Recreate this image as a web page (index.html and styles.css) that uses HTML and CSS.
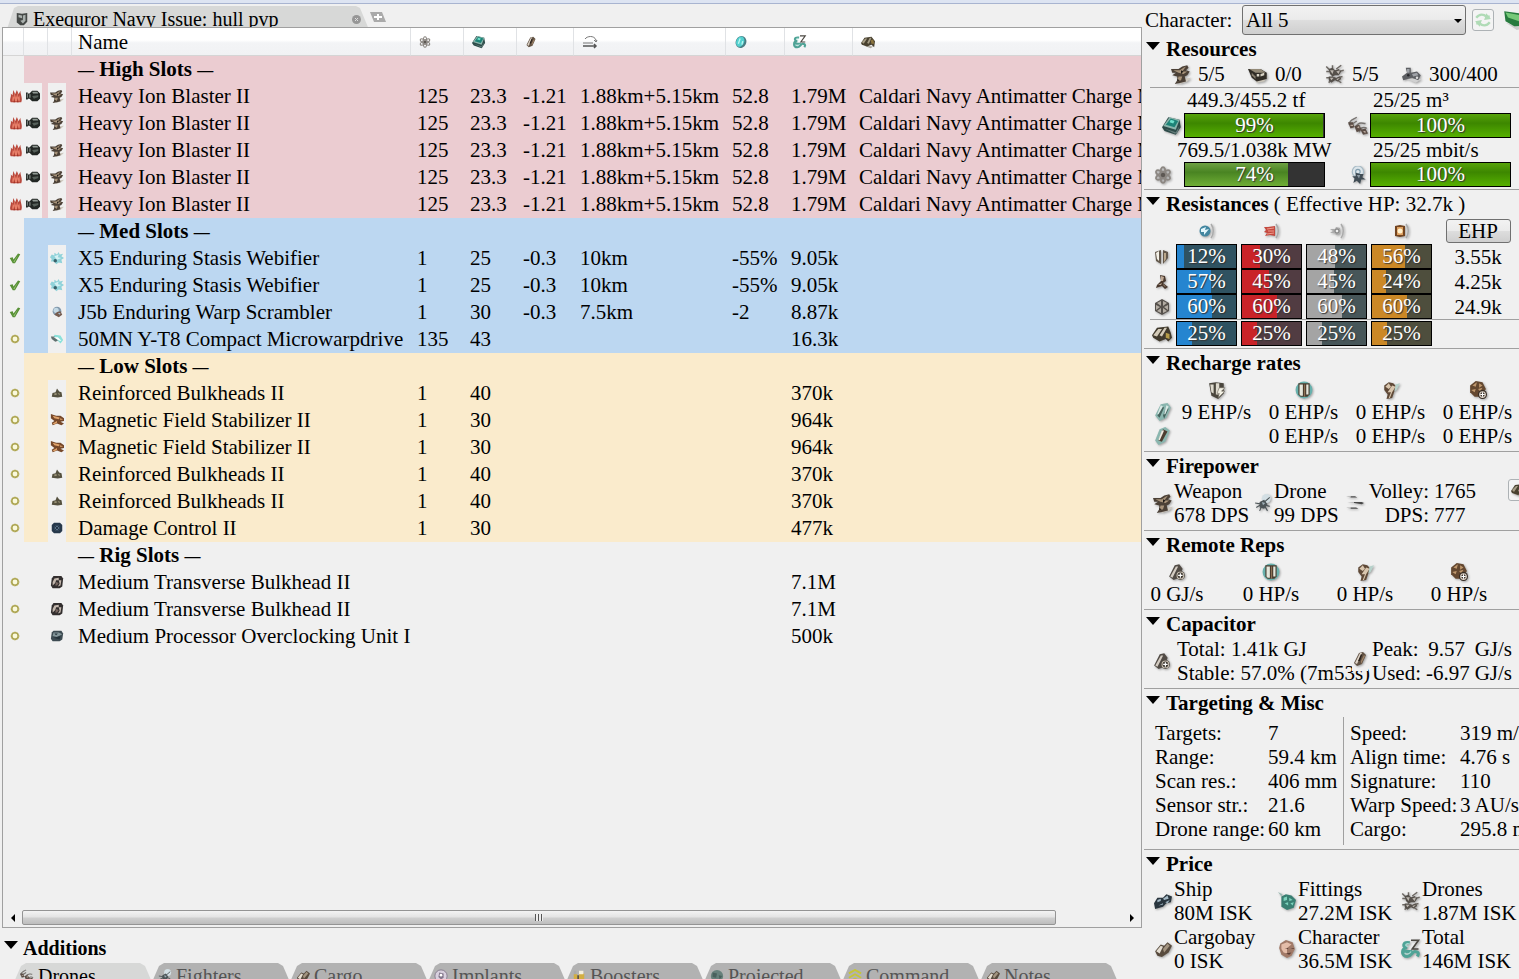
FILE: index.html
```html
<!DOCTYPE html>
<html lang="en">
<head>
  <meta charset="UTF-8">
  <meta name="viewport" content="width=device-width, initial-scale=1.0">
  <title>Exequror Navy Issue: hull pvp</title>
  <link rel="stylesheet" href="styles.css">
</head>
<body>
  <!-- Icon sprite -->
  <svg class="sprite" aria-hidden="true">
    <symbol id="flame" viewBox="0 0 16 16"><path fill="#b8483c" d="M2 15C0 12 3 9 2 5l2 2 1-6 2 5 2-5 2 5 2-4c0 4 3 9 1 13z"/><path fill="#e8806a" d="M4 14c-1-3 1-5 0-7l2 3 0-6 2 6 2-6 0 6 2-3c0 3 1 4 0 7z"/><path fill="#a33226" d="M5 15l1-5 1 5zM9 15l1-5 1 5z"/></symbol>
    <symbol id="ammo" viewBox="0 0 16 16"><path fill="#222724" d="M0 4h2v1h2l3-3h6l3 3v6l-3 3-6 0-3-3H2v1H0z"/><path fill="#929b95" d="M7 3l6 0 1 2-6 0zM1 5h1v5H1z"/><path fill="#56605a" d="M7 8l7-1v2l-5 2z"/><path fill="#aeb5b0" d="M4 6h1v4H4z"/></symbol>
    <symbol id="turret" viewBox="0 0 16 16"><path fill="#cfc9bf" d="M8 12l8-1-3 3-6 2z"/><path fill="#4b4036" d="M0 4l6 0 3-2 4-1 1 2-2 2 3 1-2 3-2 1 1 4-4 1-5 1 2-3 0-3-4-1 3-2-3 0z"/><path fill="#a8937a" d="M2 5l5 0 3-2 2-1-3 4 4 0-3 2-4-1zM6 10l3 0-1 3-3 1z"/><path fill="#201c18" d="M8 5l2 1-2 2zM5 12l2 1-2 1z"/></symbol>
    <symbol id="launcher" viewBox="0 0 16 16"><path fill="#c9c4b8" d="M6 12l10-2-3 4-6 1z"/><path fill="#302c26" d="M0 4l10 0 5 3v5l-8 2-4-3z"/><path fill="#938a78" d="M1 4l9 0 4 3-8 0z"/><path fill="#d9d4c6" d="M7 8l2 0v2l-2 0zM10 8l3-1v2l-3 1z"/><path fill="#887f6f" d="M3 9l3 3 0-2-3-3z"/></symbol>
    <symbol id="drone" viewBox="0 0 16 16"><g fill="none" stroke="#6d6863" stroke-width="1.200"><path d="M1 2l3 3M1 6l4 0M6 1v3M9 4l4-3M11 6l4-1M1 11l3 0M3 15l2-3M10 11l4-1M10 13l3 2"/></g><path fill="#55504b" d="M3 4l3-1 2 2 3-1 2 2-2 3-3 0-2 1-2-2zM3 10l3 0 3 1 3-1 1 2-3 2-2-1-3 2-2-2z"/><path fill="#bbb5ae" d="M4 5l3 0-1 3zM9 6l3-1-1 3zM4 11l3 0-2 2zM9 12l3-1-2 2z"/></symbol>
    <symbol id="calib" viewBox="0 0 16 16"><path fill="#d0d0d0" d="M4 12h12l-5 3z"/><path fill="#5d5f63" d="M3 3l4 0 0 4 5-1 3 3-2 4-5-2-7 2-1-3 4-3z"/><path fill="#a0a3a8" d="M4 4h2v3H4zM8 8l4-1 1 2-4 1z"/><circle cx="5" cy="9" r="1" fill="#27282b"/><circle cx="12" cy="11" r="1" fill="#ddd"/></symbol>
    <symbol id="cpu" viewBox="0 0 16 16"><path fill="#2d4b49" d="M0 9l5-8 9 2 1 6-4 6-9-3z"/><path fill="#8ab5ac" d="M1 8l5-7 8 2-3 8z"/><path fill="#1d8377" d="M3 7l4-5 6 2-3 5z"/><path fill="#6fe0cb" d="M6 5l1-2 3 1-1 2z"/><path fill="#647c7a" d="M2 10l9 3 3-5-2 6-2 0z"/></symbol>
    <symbol id="atom" viewBox="0 0 16 16"><g fill="none" stroke="#8c8782" stroke-width="1.500"><ellipse cx="8" cy="8" rx="2.500" ry="7"/><ellipse cx="8" cy="8" rx="2.500" ry="7" transform="rotate(60 8 8)"/><ellipse cx="8" cy="8" rx="2.500" ry="7" transform="rotate(120 8 8)"/></g><circle cx="8" cy="8" r="2" fill="#5d5853"/></symbol>
    <symbol id="bay" viewBox="0 0 16 16"><g fill="none" stroke="#777370" stroke-width="1.200"><path d="M1 7c0-4 3-4 6-6M4 6l3-2M6 9c3-5 5-3 8-3M9 13c1-5 5-4 6-3"/></g><path fill="#5b4d46" d="M0 5l4 0 1 4-3 1zM5 8l4-1 2 4-4 2zM10 11l4-1 2 4-4 1z"/><path fill="#b9a89c" d="M2 7h2v1H2zM7 9l2-1v2zM12 12h2v2z"/></symbol>
    <symbol id="band" viewBox="0 0 16 16"><circle cx="7" cy="5" r="5" fill="#dce5ea" stroke="#a6bac5"/><circle cx="7" cy="5" r="2" fill="none" stroke="#829eae"/><path fill="#404c54" d="M5 6l4 1 3 0-1 3 3 2-4 0-1 4-3-3-3 2 1-4-2-2 3 0z"/><path fill="#8d9ba4" d="M6 8l3 0-1 3z"/></symbol>
    <symbol id="cap" viewBox="0 0 16 16"><path fill="#605143" d="M2 12L7 2l4-1 3 3-4 9-5 2z"/><path fill="#dfd5c9" d="M3 12l5-10 2 0-5 11z"/><path fill="#a08469" d="M9 10l3-6 1 1-4 8z"/><path fill="#29211a" d="M6 10l3-7 1 1-2 6z"/></symbol>
    <symbol id="capplus" viewBox="0 0 16 16"><path fill="#514b45" d="M1 12L6 2l4-1 3 4-3 8-5 2z"/><path fill="#d4ccc2" d="M2 12L7 3l2 0-5 10z"/><circle cx="11" cy="11" r="4" fill="#3e3932"/><circle cx="11" cy="11" r="3" fill="none" stroke="#c8bfb2"/><path stroke="#fff" d="M9 11h4M11 9v4"/></symbol>
    <symbol id="range" viewBox="0 0 16 16"><path fill="none" stroke="#777" d="M3 5C5 2 12 1 14 6v2M12 6l2 2 1-2M1 9h10"/><path fill="none" stroke="#555" stroke-width="1.500" d="M1 12h13M12 10l2 2-2 2"/></symbol>
    <symbol id="disc" viewBox="0 0 16 16"><ellipse cx="8" cy="8" rx="6" ry="7" transform="rotate(25 8 8)" fill="#497d83"/><ellipse cx="7" cy="8" rx="4.500" ry="6" transform="rotate(25 8 8)" fill="#53d1d0"/><path stroke="#bdf6f0" stroke-width="1.500" d="M5 10l2-6M9 11l1-4"/></symbol>
    <symbol id="isk" viewBox="0 0 16 16"><path fill="none" stroke="#4fa396" stroke-width="2.500" d="M7 3C1 2 1 7 5 7c-5 0-5 7 0 7 3 0 4-4 6-4s4 1 2 4M2 10h7"/><path fill="none" stroke="#a5dcd3" d="M7 4C3 3 3 6 6 6M3 11c1 2 4 1 5-1"/><path fill="none" stroke="#4b4741" stroke-width="1.300" d="M8 1h6L9 8h5"/></symbol>
    <symbol id="charge" viewBox="0 0 16 16"><path fill="#aca79d" d="M3 12l11 1-3 2z"/><path fill="#49412f" d="M0 9l4-6 8-1 4 5-1 7-3-3-5 2-6-2z"/><path fill="#a69d86" d="M1 8l4-4 2 0-4 6zM7 9l3-6 2 0-3 7z"/><path fill="#8b743e" d="M11 6l3-1 1 5-3 0z"/></symbol>
    <symbol id="web" viewBox="0 0 16 16"><path fill="#8fd2d9" d="M2 4l3 1 0-3 3 2 2-3 1 3 4-1-2 3 3 2-3 2 1 4-4-1-3 2-2-3-4 0 1-3-2-2z"/><path fill="#d5f1f3" d="M5 6l5-2-1 3 4 1-5 2z"/><circle cx="6" cy="11" r="2" fill="#39626a"/></symbol>
    <symbol id="scram" viewBox="0 0 16 16"><circle cx="8" cy="7" r="5" fill="#8299ad"/><circle cx="7" cy="6" r="3" fill="#c4d9e5"/><path fill="#775d50" d="M8 8l4-1 2 4-4 3-5-3z"/><path fill="#a3b9cb" d="M9 9l3 0-1 2z"/></symbol>
    <symbol id="mwd" viewBox="0 0 16 16"><path fill="#8be1da" d="M5 3l7 1 3 5-3 4-3-3-5-2z"/><path fill="#60706f" d="M1 5l4 0 4 5-3 1-4-3z"/><path fill="#fff" d="M4 6l5 0 4 4-2 0z"/></symbol>
    <symbol id="check" viewBox="0 0 16 16"><path fill="#568f34" d="M1 8l4-1 1 3 6-8 3 1-7 12H5z"/><path fill="#9bc77b" d="M3 8l3 5 6-9-5 10z"/></symbol>
    <symbol id="ring" viewBox="0 0 16 16"><circle cx="8" cy="8" r="4.500" fill="#faf9dc" stroke="#aaa34e" stroke-width="2.500"/><circle cx="8" cy="8" r="5" fill="none" stroke="#c9c282" stroke-dasharray="2 2"/></symbol>
    <symbol id="bulk" viewBox="0 0 16 16"><path fill="#55513f" d="M1 13l1-5 4-1 2-5 3 4 3 1 1 6-6 1z"/><path fill="#9e967b" d="M4 9l3-1 1 2-3 1zM9 8l3 1-1 2z"/></symbol>
    <symbol id="mag" viewBox="0 0 16 16"><path fill="#76482a" d="M1 1l6 2 5 0 4 3v3l-4 1 4 2-3 2-5-2-5 2-1-3 3-2-4-3z"/><path fill="#e0a36b" d="M3 3l8 2-1 2-5-1zM3 12l5-3 0 2-3 2zM11 6l4 1-3 1z"/></symbol>
    <symbol id="dc" viewBox="0 0 16 16"><path fill="#26384b" d="M4 1h8l3 3v8l-3 3H4l-3-3V4z"/><path fill="#587086" d="M5 5h6v6H5z"/><path stroke="#152332" d="M5 5l6 6M11 5l-6 6"/></symbol>
    <symbol id="rig" viewBox="0 0 16 16"><path fill="#322e2e" d="M4 1h9l2 3-1 9-3 2H3l-2-3 1-8z"/><path fill="#c3b7ad" d="M5 4l5-1 0 3-3 0-1 3-3 3 0-4zM10 6l3 0-1 6-3 1 2-3z"/><path fill="#786760" d="M7 8l3 1-2 3-2 0z"/></symbol>
    <symbol id="rig2" viewBox="0 0 16 16"><path fill="#3d4b52" d="M4 2h9l2 3-1 7-3 2H3l-2-3 1-7z"/><path fill="#84969a" d="M4 4h6l4 2-6 3-5-1z"/><path fill="#24323a" d="M5 5h4l-2 2zM4 10l8-2-1 4z"/></symbol>
    <symbol id="em" viewBox="0 0 16 16"><circle cx="6" cy="8" r="5.500" fill="#4286a0"/><path fill="#e2f6fc" d="M2 6l5-2-1 3 4-1-5 6 0-3-3 0z"/><path fill="none" stroke="#aaa" stroke-width="1.500" d="M12 1c3 4 3 10 0 14"/></symbol>
    <symbol id="therm" viewBox="0 0 16 16"><path fill="#c4493f" d="M0 4l4 0 7-1v10l-5-1-5 1 2-3-3-1 2-2z"/><path fill="none" stroke="#ef9b8b" d="M3 6l7-1M4 8l6 0M3 11l7-1"/><path fill="none" stroke="#aaa" stroke-width="1.500" d="M12 1c3 4 3 10 0 14"/></symbol>
    <symbol id="kin" viewBox="0 0 16 16"><path fill="#aaa" d="M1 6l5 0 1-2 4 1 0 6-4 1-1-2-5 0 3-2z"/><circle cx="8" cy="8" r="2" fill="#eee" stroke="#777"/><path fill="none" stroke="#aaa" stroke-width="1.500" d="M12 1c3 4 3 10 0 14"/></symbol>
    <symbol id="exp" viewBox="0 0 16 16"><path fill="#724420" d="M1 3l5-1 5 1v10l-5 1-5-1z"/><path fill="#dda060" d="M3 4h6v8H3z"/><circle cx="6" cy="8" r="2.500" fill="#fff1ce"/><path fill="none" stroke="#aaa" stroke-width="1.500" d="M12 1c3 4 3 10 0 14"/></symbol>
    <symbol id="shield" viewBox="0 0 16 16"><path fill="#63584c" d="M1 3l6-2v14l-5-3zM9 1l5 2 0 6-5 6z"/><path fill="#f4f1e8" d="M2 4l3-2v10l-2-2z"/><path fill="#bba78b" d="M10 4l2 0 0 6-2 3z"/></symbol>
    <symbol id="armor" viewBox="0 0 16 16"><path fill="#49382d" d="M6 1l5 1 1 5-3 2 5 4-3 2-3-3-6 2 1-3 4-4z"/><path fill="#c0aa96" d="M7 2l3 1-1 4-2 0zM4 11l4-2-1 2zM9 10l3 3-2-1z"/></symbol>
    <symbol id="hull" viewBox="0 0 16 16"><path fill="#55504b" d="M8 0l7 4v8l-7 4-7-4V4z"/><path fill="#b3aca3" d="M7 2v5L3 4zM9 2l4 2-4 3zM2 6l4 2-4 3zM10 8l4-2v5zM7 9v5l-4-2zM9 9l4 3-4 2z"/></symbol>
    <symbol id="pattern" viewBox="0 0 16 16"><path fill="#40392c" d="M0 9l4-6 9-1 2 5 1 4-3 3-2-2-5 2-5-3z"/><path fill="#d4cbb9" d="M1 9l4-5 3 0-4 6zM6 9l4-6 2 0-4 7z"/><path fill="#b59b48" d="M11 7l3 1 0 4-3-1z"/></symbol>
    <symbol id="passive" viewBox="0 0 16 16"><path fill="#4a463d" d="M1 2l6-1 7 1v9l-5 5-6-3z"/><path fill="#dedace" d="M2 3h3v8l-2-1zM7 2h3v10l-3 0z"/><path fill="#f4f2e6" stroke="#645f54" stroke-width=".5" d="M10 6h5l-3 3h3l-6 6 1-4H8z"/></symbol>
    <symbol id="shieldrep" viewBox="0 0 16 16"><circle cx="8" cy="8" r="7.500" fill="#68b1ad"/><path fill="#483b2e" d="M3 2h10v10l-2 2H5l-2-2z"/><path fill="#e4e7dc" d="M4 3h3v10H5l-1-1zM10 3h2v9h-2z"/><path fill="#8b7054" d="M8 3h1v11H8z"/></symbol>
    <symbol id="armorrep" viewBox="0 0 16 16"><path fill="#5f4937" d="M2 4l4-3 4 1 3 3-2 4-2 6-5 1 1-4-3-4z"/><path fill="#b7d2cb" d="M12 3l4-1-3 6-2 1z"/><path fill="#d9c6ae" d="M3 5l3-3 2 3-2 2zM9 4l3 1-3 5-2 5-1 0 2-5H5z"/></symbol>
    <symbol id="hullrep" viewBox="0 0 16 16"><path fill="#644830" d="M1 4l5-4 6 1 3 6-4 7-6 0-4-4z"/><path fill="#bf986e" d="M3 4l4-3-1 4zM9 2l3 2-3 2zM2 8l4-1-1 3zM8 7l4-1-2 3z"/><circle cx="12" cy="12" r="4" fill="#342b24"/><circle cx="12" cy="12" r="2.500" fill="none" stroke="#e0d5c8"/><path stroke="#fff" d="M10 12h4M12 10v4"/></symbol>
    <symbol id="reinf" viewBox="0 0 16 16"><path fill="#8ab6af" d="M1 11L6 1l6-1 3 4-4 9-6 3z"/><path fill="#45645e" d="M3 11l4-8 2 1-4 9zM8 11l3-7 2 1-4 9z"/><path fill="#d9e9e5" d="M6 2l2 1-4 7-1 0zM11 2l2 1-3 7-1 0z"/></symbol>
    <symbol id="sust" viewBox="0 0 16 16"><path fill="#8ab6af" d="M1 12L5 2l5-2 4 3-4 10-6 3z"/><path fill="#4c3d30" d="M4 12l4-10 4 2-5 9z"/><path fill="#eee9df" d="M4 11l3-8 2 0-4 9z"/></symbol>
    <symbol id="volley" viewBox="0 0 16 16"><path fill="#484848" d="M4 2l4 0 2 1-6 0zM7 7l7 0 2 1-2 1-7-1zM4 12l5 0 2 1-7 0z"/><path fill="#b4b4b4" d="M0 2l4 0v1zM1 7l6 0v1zM0 12l4 0v1z"/></symbol>
    <symbol id="dronedps" viewBox="0 0 16 16"><circle cx="11" cy="4" r="4" fill="#d3dfe4"/><path fill="none" stroke="#4c5457" d="M1 8l6 1 7-6M2 12l5-3 7 2M5 15l3-7 4 7"/><path fill="#4c5457" d="M5 7l4-2 3 4-3 4-4-1z"/><path fill="#a1b1b9" d="M7 7l3 1-2 2z"/></symbol>
    <symbol id="ship" viewBox="0 0 16 16"><path fill="#29353e" d="M0 10l3-5 5 0 3-3 5 2-1 5-4 1-3 3-7 2z"/><path fill="#a5bac6" d="M3 7l3-1 0 2-3 1zM8 6l4-3 1 3-4 1zM10 9l4-2-2 3zM4 12l4-2 0 1z"/></symbol>
    <symbol id="fit" viewBox="0 0 16 16"><path fill="#9bb9b2" d="M0 0l4 2-1 2z"/><path fill="#397f72" d="M3 4l4-2 5 1 4 4-2 7-6 2-5-3z"/><path fill="#7dd3bd" d="M5 5l3-1 0 3-3 1zM10 5l3 2-3 1zM6 10l3-1 0 3zM11 10l3-1-1 3z"/></symbol>
    <symbol id="cargo" viewBox="0 0 16 16"><path fill="#574a3d" d="M1 10l5-6 3 1 3-3 4 3-3 6-6 4-4-1z"/><path fill="#e4ddd1" d="M2 10l4-5 2 1-3 6z"/><path fill="#a39480" d="M8 8l4-5 2 2-5 6z"/></symbol>
    <symbol id="face" viewBox="0 0 16 16"><path fill="#a17a68" d="M2 3l5-3 6 2 2 6-3 6-4 2-5-3-2-6z"/><path fill="#e4bda9" d="M3 4l5-2 4 2-4 3 0 5-3-1-2-3z"/><path fill="#573a31" d="M6 7l3 0v1zM11 7l3 0v1zM7 12l5-1-2 2z"/></symbol>
    <symbol id="refresh" viewBox="0 0 16 16"><path fill="none" stroke="#b0dbb6" stroke-width="2" d="M2 6c3-4 7-3 9-1h3M14 10c-3 4-7 3-9 1H2"/><path fill="#b0dbb6" d="M11 2l4 5-6 1zM5 14l-4-5 6-1z"/></symbol>
    <symbol id="load" viewBox="0 0 16 16"><path fill="#ccc" d="M2 10l9 6 5-1z"/><path fill="#277a3e" d="M1 1l14 2v10l-6 0-7-4z"/><path fill="#76c979" d="M2 2l11 2v5l-9-3z"/></symbol>
    <symbol id="crest" viewBox="0 0 16 16"><path fill="#444846" d="M2 1l6 1 6-1v10l-4 4H6l-4-3z"/><path fill="#a9b0ad" d="M4 3l4 1v3l-4-1zM9 4l3-1v7l-3 3-3-3 3-1z"/></symbol>
    <symbol id="booster" viewBox="0 0 16 16"><path fill="#aaa" d="M2 2h3v5H2z"/><path fill="#d3ae42" d="M2 6h4v10H2zM8 5h6v11H8z"/><path fill="#f4eedc" d="M8 2h5v4H8z"/><path fill="#60543c" d="M6 7h2v9H6z"/></symbol>
    <symbol id="globe" viewBox="0 0 16 16"><circle cx="8" cy="8" r="7" fill="#66807b"/><path fill="#49615d" d="M3 4l5 1-1 5-4-1zM10 7l4 1-3 4z"/></symbol>
    <symbol id="chevrons" viewBox="0 0 16 16"><path fill="none" stroke="#c5c539" stroke-width="2" d="M1 5l7-4 7 4M1 10l7-4 7 4M1 15l7-4 7 4"/></symbol>
    <symbol id="implant" viewBox="0 0 16 16"><circle cx="8" cy="8" r="7" fill="#d8d0de" stroke="#84788d"/><path fill="#84788d" d="M6 4l5 1 0 5-3 2-3-3z"/><circle cx="8" cy="7" r="1.500" fill="#fff"/></symbol>
  </svg>

  <div class="topline"></div>
  <div class="app">
    <main class="fitting">
      <div class="fit-tabs">
        <div class="fit-tab">
          <svg class="ic"><use href="#crest"/></svg>
          <span class="fit-title">Exequror Navy Issue: hull pvp</span>
          <button class="plain" aria-label="Close tab"><svg class="close" viewBox="0 0 9 9"><circle cx="4.500" cy="4.500" r="4.500" fill="#969696"/><path d="M3 3l3 3M6 3l-3 3" stroke="#ddd"/></svg></button>
        </div>
        <button class="plain" aria-label="New tab"><svg class="add" viewBox="0 0 16 10"><path fill="#aaa" d="M0 0h12l4 10H4z"/><path fill="#fff" d="M7 2h2v2h3v2H9v2H7V6H4V4h3z"/></svg></button>
      </div>

      <div class="frame">
        <div class="table-wrap">
          <table class="modules">
            <colgroup>
              <col class="c-state"><col class="c-icon"><col class="c-icon"><col class="c-name"><col class="c-num"><col class="c-num">
              <col class="c-cap"><col class="c-range"><col class="c-misc"><col class="c-price"><col>
            </colgroup>
            <thead>
              <tr>
                <th></th><th></th><th></th><th>Name</th>
                <th><svg class="ic s12"><use href="#atom"/></svg></th>
                <th><svg class="ic"><use href="#cpu"/></svg></th>
                <th><svg class="ic s12"><use href="#cap"/></svg></th>
                <th><svg class="ic s16"><use href="#range"/></svg></th>
                <th><svg class="ic"><use href="#disc"/></svg></th>
                <th><svg class="ic"><use href="#isk"/></svg></th>
                <th><svg class="ic"><use href="#charge"/></svg></th>
              </tr>
            </thead>
            <tbody class="high">
              <tr class="group"><td></td><td></td><td></td><td colspan="8"><i>—</i> High Slots <i>—</i></td></tr>
              <tr><td><svg class="ic"><use href="#flame"/></svg></td><td><span class="box"><svg class="ic"><use href="#ammo"/></svg></span></td><td><span class="box"><svg class="ic"><use href="#turret"/></svg></span></td><td>Heavy Ion Blaster II</td><td>125</td><td>23.3</td><td>-1.21</td><td>1.88km+5.15km</td><td>52.8</td><td>1.79M</td><td>Caldari Navy Antimatter Charge M</td></tr>
              <tr><td><svg class="ic"><use href="#flame"/></svg></td><td><span class="box"><svg class="ic"><use href="#ammo"/></svg></span></td><td><span class="box"><svg class="ic"><use href="#turret"/></svg></span></td><td>Heavy Ion Blaster II</td><td>125</td><td>23.3</td><td>-1.21</td><td>1.88km+5.15km</td><td>52.8</td><td>1.79M</td><td>Caldari Navy Antimatter Charge M</td></tr>
              <tr><td><svg class="ic"><use href="#flame"/></svg></td><td><span class="box"><svg class="ic"><use href="#ammo"/></svg></span></td><td><span class="box"><svg class="ic"><use href="#turret"/></svg></span></td><td>Heavy Ion Blaster II</td><td>125</td><td>23.3</td><td>-1.21</td><td>1.88km+5.15km</td><td>52.8</td><td>1.79M</td><td>Caldari Navy Antimatter Charge M</td></tr>
              <tr><td><svg class="ic"><use href="#flame"/></svg></td><td><span class="box"><svg class="ic"><use href="#ammo"/></svg></span></td><td><span class="box"><svg class="ic"><use href="#turret"/></svg></span></td><td>Heavy Ion Blaster II</td><td>125</td><td>23.3</td><td>-1.21</td><td>1.88km+5.15km</td><td>52.8</td><td>1.79M</td><td>Caldari Navy Antimatter Charge M</td></tr>
              <tr><td><svg class="ic"><use href="#flame"/></svg></td><td><span class="box"><svg class="ic"><use href="#ammo"/></svg></span></td><td><span class="box"><svg class="ic"><use href="#turret"/></svg></span></td><td>Heavy Ion Blaster II</td><td>125</td><td>23.3</td><td>-1.21</td><td>1.88km+5.15km</td><td>52.8</td><td>1.79M</td><td>Caldari Navy Antimatter Charge M</td></tr>
            </tbody>
            <tbody class="med">
              <tr class="group"><td></td><td></td><td></td><td colspan="8"><i>—</i> Med Slots <i>—</i></td></tr>
              <tr><td><svg class="ic s12"><use href="#check"/></svg></td><td></td><td><span class="box"><svg class="ic"><use href="#web"/></svg></span></td><td>X5 Enduring Stasis Webifier</td><td>1</td><td>25</td><td>-0.3</td><td>10km</td><td>-55%</td><td>9.05k</td><td></td></tr>
              <tr><td><svg class="ic s12"><use href="#check"/></svg></td><td></td><td><span class="box"><svg class="ic"><use href="#web"/></svg></span></td><td>X5 Enduring Stasis Webifier</td><td>1</td><td>25</td><td>-0.3</td><td>10km</td><td>-55%</td><td>9.05k</td><td></td></tr>
              <tr><td><svg class="ic s12"><use href="#check"/></svg></td><td></td><td><span class="box"><svg class="ic"><use href="#scram"/></svg></span></td><td>J5b Enduring Warp Scrambler</td><td>1</td><td>30</td><td>-0.3</td><td>7.5km</td><td>-2</td><td>8.87k</td><td></td></tr>
              <tr><td><svg class="ic s12"><use href="#ring"/></svg></td><td></td><td><span class="box"><svg class="ic"><use href="#mwd"/></svg></span></td><td>50MN Y-T8 Compact Microwarpdrive</td><td>135</td><td>43</td><td></td><td></td><td></td><td>16.3k</td><td></td></tr>
            </tbody>
            <tbody class="low">
              <tr class="group"><td></td><td></td><td></td><td colspan="8"><i>—</i> Low Slots <i>—</i></td></tr>
              <tr><td><svg class="ic s12"><use href="#ring"/></svg></td><td></td><td><span class="box"><svg class="ic s12"><use href="#bulk"/></svg></span></td><td>Reinforced Bulkheads II</td><td>1</td><td>40</td><td></td><td></td><td></td><td>370k</td><td></td></tr>
              <tr><td><svg class="ic s12"><use href="#ring"/></svg></td><td></td><td><span class="box"><svg class="ic"><use href="#mag"/></svg></span></td><td>Magnetic Field Stabilizer II</td><td>1</td><td>30</td><td></td><td></td><td></td><td>964k</td><td></td></tr>
              <tr><td><svg class="ic s12"><use href="#ring"/></svg></td><td></td><td><span class="box"><svg class="ic"><use href="#mag"/></svg></span></td><td>Magnetic Field Stabilizer II</td><td>1</td><td>30</td><td></td><td></td><td></td><td>964k</td><td></td></tr>
              <tr><td><svg class="ic s12"><use href="#ring"/></svg></td><td></td><td><span class="box"><svg class="ic s12"><use href="#bulk"/></svg></span></td><td>Reinforced Bulkheads II</td><td>1</td><td>40</td><td></td><td></td><td></td><td>370k</td><td></td></tr>
              <tr><td><svg class="ic s12"><use href="#ring"/></svg></td><td></td><td><span class="box"><svg class="ic s12"><use href="#bulk"/></svg></span></td><td>Reinforced Bulkheads II</td><td>1</td><td>40</td><td></td><td></td><td></td><td>370k</td><td></td></tr>
              <tr><td><svg class="ic s12"><use href="#ring"/></svg></td><td></td><td><span class="box"><svg class="ic s12"><use href="#dc"/></svg></span></td><td>Damage Control II</td><td>1</td><td>30</td><td></td><td></td><td></td><td>477k</td><td></td></tr>
            </tbody>
            <tbody>
              <tr class="group"><td></td><td></td><td></td><td colspan="8"><i>—</i> Rig Slots <i>—</i></td></tr>
              <tr><td><svg class="ic s12"><use href="#ring"/></svg></td><td></td><td><span class="box"><svg class="ic"><use href="#rig"/></svg></span></td><td>Medium Transverse Bulkhead II</td><td></td><td></td><td></td><td></td><td></td><td>7.1M</td><td></td></tr>
              <tr><td><svg class="ic s12"><use href="#ring"/></svg></td><td></td><td><span class="box"><svg class="ic"><use href="#rig"/></svg></span></td><td>Medium Transverse Bulkhead II</td><td></td><td></td><td></td><td></td><td></td><td>7.1M</td><td></td></tr>
              <tr><td><svg class="ic s12"><use href="#ring"/></svg></td><td></td><td><span class="box"><svg class="ic"><use href="#rig2"/></svg></span></td><td>Medium Processor Overclocking Unit I</td><td></td><td></td><td></td><td></td><td></td><td>500k</td><td></td></tr>
            </tbody>
          </table>
        </div>
        <div class="scrollbar">
          <button class="plain" aria-label="Scroll left"><svg class="arrow" viewBox="0 0 4 8"><path d="M4 0v8L0 4z"/></svg></button>
          <div class="track"><div class="thumb"><span class="grip"></span></div></div>
          <button class="plain" aria-label="Scroll right"><svg class="arrow" viewBox="0 0 4 8"><path d="M0 0v8l4-4z"/></svg></button>
        </div>
      </div>

      <h2 class="additions"><button class="toggle">Additions</button></h2>
      <nav class="bottom-tabs">
        <button class="tab active"><svg class="ic"><use href="#bay"/></svg>Drones</button>
        <button class="tab"><svg class="ic"><use href="#dronedps"/></svg>Fighters</button>
        <button class="tab"><svg class="ic"><use href="#cargo"/></svg>Cargo</button>
        <button class="tab"><svg class="ic"><use href="#implant"/></svg>Implants</button>
        <button class="tab"><svg class="ic"><use href="#booster"/></svg>Boosters</button>
        <button class="tab"><svg class="ic"><use href="#globe"/></svg>Projected</button>
        <button class="tab"><svg class="ic"><use href="#chevrons"/></svg>Command</button>
        <button class="tab"><svg class="ic"><use href="#cargo"/></svg>Notes</button>
      </nav>
    </main>

    <aside class="stats">
      <div class="character">
        <label for="character">Character:</label>
        <div class="select-wrap">
          <select id="character"><option>All 5</option></select>
          <svg class="caret" viewBox="0 0 8 4"><path d="M0 0h8L4 4z"/></svg>
        </div>
        <button class="refresh" aria-label="Refresh"><svg class="ic s18"><use href="#refresh"/></svg></button>
        <button class="plain" aria-label="Load"><svg class="ic s20"><use href="#load"/></svg></button>
      </div>

      <section>
        <h2><button class="toggle">Resources</button></h2>
        <div class="slots">
          <span><svg class="ic s20"><use href="#turret"/></svg>5/5</span>
          <span><svg class="ic s20"><use href="#launcher"/></svg>0/0</span>
          <span><svg class="ic s20"><use href="#drone"/></svg>5/5</span>
          <span><svg class="ic s20"><use href="#calib"/></svg>300/400</span>
        </div>
        <div class="usage">
          <span class="amount cpu">449.3/455.2 tf</span>
          <span class="amount">25/25 m³</span>
          <svg class="ic s20"><use href="#cpu"/></svg>
          <div class="bar green"><div class="fill" style="width: 99%"></div><span>99%</span></div>
          <svg class="ic s20"><use href="#bay"/></svg>
          <div class="bar green"><div class="fill" style="width: 100%"></div><span>100%</span></div>
          <span class="amount power">769.5/1.038k MW</span>
          <span class="amount">25/25 mbit/s</span>
          <svg class="ic s18 start"><use href="#atom"/></svg>
          <div class="bar green soft"><div class="fill" style="width: 74%"></div><span>74%</span></div>
          <svg class="ic s18"><use href="#band"/></svg>
          <div class="bar green"><div class="fill" style="width: 100%"></div><span>100%</span></div>
        </div>
      </section>

      <section>
        <h2><button class="toggle">Resistances</button> <span class="ehp">( Effective HP: 32.7k )</span></h2>
        <div class="resists">
          <span></span>
          <svg class="ic s16"><use href="#em"/></svg>
          <svg class="ic s16"><use href="#therm"/></svg>
          <svg class="ic s16"><use href="#kin"/></svg>
          <svg class="ic s16"><use href="#exp"/></svg>
          <button class="ehp-btn">EHP</button>

          <svg class="ic s16"><use href="#shield"/></svg>
          <div class="bar blue"><div class="fill" style="width: 12%"></div><span>12%</span></div>
          <div class="bar red"><div class="fill" style="width: 30%"></div><span>30%</span></div>
          <div class="bar gray"><div class="fill" style="width: 48%"></div><span>48%</span></div>
          <div class="bar orange"><div class="fill" style="width: 56%"></div><span>56%</span></div>
          <span>3.55k</span>

          <svg class="ic s16"><use href="#armor"/></svg>
          <div class="bar blue"><div class="fill" style="width: 57%"></div><span>57%</span></div>
          <div class="bar red"><div class="fill" style="width: 45%"></div><span>45%</span></div>
          <div class="bar gray"><div class="fill" style="width: 45%"></div><span>45%</span></div>
          <div class="bar orange"><div class="fill" style="width: 24%"></div><span>24%</span></div>
          <span>4.25k</span>

          <svg class="ic s16"><use href="#hull"/></svg>
          <div class="bar blue"><div class="fill" style="width: 60%"></div><span>60%</span></div>
          <div class="bar red"><div class="fill" style="width: 60%"></div><span>60%</span></div>
          <div class="bar gray"><div class="fill" style="width: 60%"></div><span>60%</span></div>
          <div class="bar orange"><div class="fill" style="width: 60%"></div><span>60%</span></div>
          <span>24.9k</span>
        </div>
        <div class="resists damage">
          <svg class="ic s20"><use href="#pattern"/></svg>
          <div class="bar blue"><div class="fill" style="width: 25%"></div><span>25%</span></div>
          <div class="bar red"><div class="fill" style="width: 25%"></div><span>25%</span></div>
          <div class="bar gray"><div class="fill" style="width: 25%"></div><span>25%</span></div>
          <div class="bar orange"><div class="fill" style="width: 25%"></div><span>25%</span></div>
        </div>
      </section>

      <section>
        <h2><button class="toggle">Recharge rates</button></h2>
        <div class="recharge">
          <span></span>
          <svg class="ic s18 head"><use href="#passive"/></svg>
          <svg class="ic s18 head"><use href="#shieldrep"/></svg>
          <svg class="ic s18 head"><use href="#armorrep"/></svg>
          <svg class="ic s18 head"><use href="#hullrep"/></svg>
          <svg class="ic s18"><use href="#reinf"/></svg>
          <span>9 EHP/s</span><span>0 EHP/s</span><span>0 EHP/s</span><span>0 EHP/s</span>
          <svg class="ic s18"><use href="#sust"/></svg>
          <span></span><span>0 EHP/s</span><span>0 EHP/s</span><span>0 EHP/s</span>
        </div>
      </section>

      <section>
        <h2><button class="toggle">Firepower</button></h2>
        <div class="firepower">
          <div class="item"><svg class="ic s20"><use href="#turret"/></svg><p>Weapon<br>678 DPS</p></div>
          <div class="item"><svg class="ic s18"><use href="#dronedps"/></svg><p>Drone<br>99 DPS</p></div>
          <div class="item"><svg class="ic s18"><use href="#volley"/></svg>
            <dl><dt>Volley:</dt><dd>1765</dd><dt>DPS:</dt><dd>777</dd></dl>
          </div>
          <button class="refresh" aria-label="Toggle spool"><svg class="ic s16"><use href="#charge"/></svg></button>
        </div>
      </section>

      <section>
        <h2><button class="toggle">Remote Reps</button></h2>
        <div class="remote">
          <svg class="ic s18 head"><use href="#capplus"/></svg>
          <svg class="ic s18 head"><use href="#shieldrep"/></svg>
          <svg class="ic s18 head"><use href="#armorrep"/></svg>
          <svg class="ic s18 head"><use href="#hullrep"/></svg>
          <span>0 GJ/s</span><span>0 HP/s</span><span>0 HP/s</span><span>0 HP/s</span>
        </div>
      </section>

      <section>
        <h2><button class="toggle">Capacitor</button></h2>
        <div class="capacitor">
          <svg class="ic s18"><use href="#capplus"/></svg>
          <p>Total: 1.41k GJ<br>Stable: 57.0% (7m53s)</p>
          <span class="cover"><svg class="ic s16"><use href="#cap"/></svg></span>
          <div class="flow">
            <div><span>Peak:</span><span>9.57</span><span>GJ/s</span></div>
            <div><span>Used:</span><span>-6.97</span><span>GJ/s</span></div>
          </div>
        </div>
      </section>

      <section>
        <h2><button class="toggle">Targeting &amp; Misc</button></h2>
        <div class="targeting">
          <dl>
            <dt>Targets:</dt><dd>7</dd>
            <dt>Range:</dt><dd>59.4 km</dd>
            <dt>Scan res.:</dt><dd>406 mm</dd>
            <dt>Sensor str.:</dt><dd>21.6</dd>
            <dt>Drone range:</dt><dd>60 km</dd>
          </dl>
          <dl class="misc">
            <dt>Speed:</dt><dd>319 m/s</dd>
            <dt>Align time:</dt><dd>4.76 s</dd>
            <dt>Signature:</dt><dd>110</dd>
            <dt>Warp Speed:</dt><dd>3 AU/s</dd>
            <dt>Cargo:</dt><dd>295.8 m³</dd>
          </dl>
        </div>
      </section>

      <section>
        <h2><button class="toggle">Price</button></h2>
        <div class="price">
          <div class="item"><svg class="ic s18"><use href="#ship"/></svg><p>Ship<br>80M ISK</p></div>
          <div class="item"><svg class="ic s18"><use href="#fit"/></svg><p>Fittings<br>27.2M ISK</p></div>
          <div class="item"><svg class="ic s20"><use href="#drone"/></svg><p>Drones<br>1.87M ISK</p></div>
          <div class="item"><svg class="ic s18"><use href="#cargo"/></svg><p>Cargobay<br>0 ISK</p></div>
          <div class="item"><svg class="ic s18"><use href="#face"/></svg><p>Character<br>36.5M ISK</p></div>
          <div class="item"><svg class="ic s20"><use href="#isk"/></svg><p>Total<br>146M ISK</p></div>
        </div>
      </section>
    </aside>
  </div>
</body>
</html>
```

FILE: styles.css
```css
* {
  box-sizing: border-box;
}
body {
  display: flex;
  flex-direction: column;
  height: 100vh;
  margin: 0;
  overflow: hidden;
  background: #f0f0f0;
  color: #000;
  font-family: "Liberation Serif", "Times New Roman", serif;
  font-size: 21px;
  line-height: 24px;
}
button, select {
  font: inherit;
  color: inherit;
}
h2, p, dl, dd {
  margin: 0;
}
h2 {
  font-size: 21px;
}
.sprite {
  position: absolute;
  width: 0;
  height: 0;
}
.ic {
  display: block;
  flex: none;
  width: 14px;
  height: 14px;
}
.s12 { width: 12px; height: 12px; }
.s16 { width: 16px; height: 16px; }
.s18 { width: 18px; height: 18px; }
.s20 { width: 20px; height: 20px; }
.plain {
  display: flex;
  align-items: center;
  justify-content: center;
  flex: none;
  padding: 0;
  border: none;
  background: none;
}
.topline {
  flex: none;
  height: 4px;
  background: #dde4f2;
  border-bottom: 1px solid #a8b4d0;
}
.app {
  display: flex;
  flex: 1;
  min-height: 0;
}

/* Left: fitting window */
.fitting {
  display: flex;
  flex-direction: column;
  flex: 1;
  min-width: 0;
  padding: 2px 1px 0 2px;
}
.fit-tabs {
  display: flex;
  flex: none;
  height: 21px;
  overflow: hidden;
  padding-left: 4px;
  font-size: 20px;
}
.fit-tab {
  display: flex;
  align-items: center;
  gap: 4px;
  width: 364px;
  height: 26px;
  padding: 0 9px;
  background: #d7d8d7;
  clip-path: polygon(0 100%, 8px 2px, 12px 0, calc(100% - 14px) 0, calc(100% - 10px) 2px, 100% 100%);
}
.fit-title {
  flex: 1;
}
.close {
  width: 9px;
  height: 9px;
}
.add {
  width: 16px;
  height: 10px;
}
.frame {
  display: flex;
  flex-direction: column;
  flex: 1;
  min-height: 0;
  border: 1px solid #a0a0a0;
}
.table-wrap {
  flex: 1;
  min-height: 0;
  overflow: hidden;
}
.modules {
  width: 100%;
  table-layout: fixed;
  border-spacing: 0;
}
.c-state { width: 21px; }
.c-icon { width: 24px; }
.c-name { width: 339px; }
.c-num { width: 53px; }
.c-cap { width: 57px; }
.c-range { width: 152px; }
.c-misc { width: 59px; }
.c-price { width: 68px; }
.modules th {
  height: 28px;
  padding: 0 0 0 6px;
  border-right: 1px solid #e0e2e5;
  border-bottom: 1px solid #d5d5d5;
  background: linear-gradient(#fff 45%, #f3f4f6 55%, #f1f2f4);
  font-weight: normal;
  text-align: left;
}
.modules th:last-child {
  border-right: none;
}
.modules td {
  height: 27px;
  padding: 0 0 1px 6px;
  overflow: hidden;
  white-space: nowrap;
}
.modules td:nth-child(2), .modules td:nth-child(3) {
  padding: 0;
}
.modules .group td {
  padding-bottom: 0;
}
.modules th .ic {
  margin-left: 2px;
}
.group {
  font-weight: bold;
}
.group i {
  font-size: 16px;
  font-style: normal;
}
.box {
  display: flex;
  align-items: center;
  justify-content: center;
  width: 18px;
  height: 27px;
  padding-bottom: 1px;
  background: #f0f0f0;
}
.high td:not(:first-child) { background: #ebccd1; }
.med td:not(:first-child) { background: #bcd7f1; }
.low td:not(:first-child) { background: #faebcc; }

.scrollbar {
  display: flex;
  flex: none;
  height: 17px;
  padding-bottom: 1px;
}
.scrollbar .plain {
  width: 19px;
}
.arrow {
  width: 4px;
  height: 8px;
}
.track {
  flex: 1;
}
.thumb {
  display: flex;
  align-items: center;
  justify-content: center;
  width: 94%;
  height: 15px;
  border: 1px solid #949494;
  border-radius: 2px;
  background: linear-gradient(#f3f3f3, #e4e4e4 45%, #cfcfcf 55%, #bdbdbd);
}
.grip {
  width: 8px;
  height: 7px;
  background: repeating-linear-gradient(90deg, #555 0 1px, #eee 1px 3px);
}

.toggle {
  display: inline-flex;
  gap: 5px;
  padding: 0;
  border: none;
  background: none;
  font-weight: bold;
}
.toggle::before {
  content: "";
  width: 14px;
  height: 8px;
  margin-top: 5px;
  background: #000;
  clip-path: polygon(0 0, 100% 0, 50% 100%);
}
.additions {
  display: flex;
  flex: none;
  padding: 8px 0 3px 2px;
  font-size: 20px;
}
.bottom-tabs {
  display: flex;
  flex: none;
  height: 16px;
  overflow: hidden;
  padding-left: 9px;
  font-size: 20px;
}
.tab {
  display: flex;
  align-items: center;
  gap: 4px;
  flex: none;
  width: 144px;
  height: 26px;
  margin-right: -6px;
  padding: 0 0 0 9px;
  border: none;
  background: #b2b2b2;
  color: #555;
  clip-path: polygon(0 100%, 10px 3px, 15px 0, calc(100% - 15px) 0, calc(100% - 10px) 3px, 100% 100%);
}
.tab.active {
  background: #d7d8d7;
  color: #000;
}

/* Right: statistics */
.stats {
  flex: 0 0 376px;
  overflow: hidden;
  white-space: nowrap;
}
.stats section .ic {
  filter: drop-shadow(1px 1px 1px #0005);
}
.character {
  display: flex;
  align-items: center;
  height: 31px;
  padding-left: 2px;
}
.character label {
  flex: 0 0 97px;
}
.select-wrap {
  position: relative;
  flex: none;
  width: 224px;
}
.select-wrap select {
  display: block;
  width: 100%;
  height: 30px;
  padding: 0 3px;
  border: 1px solid #707070;
  border-radius: 3px;
  appearance: none;
  background: linear-gradient(#f2f2f2, #ebebeb 48%, #dddddd 52%, #cfcfcf);
}
.caret {
  position: absolute;
  top: 14px;
  right: 4px;
  width: 8px;
  height: 4px;
}
.refresh {
  display: flex;
  align-items: center;
  justify-content: center;
  flex: none;
  width: 22px;
  height: 22px;
  padding: 0;
  border: 1px solid #adb2b5;
  border-radius: 3px;
  background: #f4f4f4;
}
.character .refresh {
  margin: 0 9px 0 6px;
}
.stats section {
  margin-left: 1px;
  padding-bottom: 3px;
  border-bottom: 1px solid #a0a0a0;
}
.stats section:nth-of-type(1), .stats section:nth-of-type(2) {
  padding-bottom: 2px;
}
.stats section:last-child {
  border-bottom: none;
}
.stats h2 {
  display: flex;
  gap: 5px;
  padding: 2px 0 1px 2px;
}
.stats .toggle {
  gap: 6px;
}
.ehp {
  font-weight: normal;
}
.slots {
  display: grid;
  grid-template-columns: 77px 77px 77px auto;
  margin-left: 6px;
  padding: 0 0 1px 21px;
  border-bottom: 1px solid #a0a0a0;
}
.slots span {
  display: flex;
  align-items: center;
  gap: 7px;
}
.usage {
  display: grid;
  grid-template-columns: 30px 141px 45px 141px;
  grid-template-rows: 25px 25px 24px 25px;
  align-items: center;
  padding-left: 10px;
}
.usage .ic {
  justify-self: end;
  margin-right: 2px;
}
.usage .start {
  justify-self: start;
}
.amount {
  grid-column: span 2;
  align-self: start;
  padding-left: 48px;
}
.amount.cpu {
  padding-left: 33px;
}
.amount.power {
  padding-left: 23px;
}
.bar {
  display: grid;
  height: 25px;
  border: 1px solid #000;
  background: #333;
  color: #fff;
  line-height: 23px;
  text-align: center;
  text-shadow: 1px 1px 1px #333;
}
.bar .fill, .bar span {
  grid-area: 1 / 1;
}
.green .fill { background: linear-gradient(#57a30a, #3d8700 40%, #56b000); }
.soft .fill { background: linear-gradient(#6ea143, #498422 40%, #6fae35); }
.blue { background: #2f5261; }
.blue .fill { background: #2585d0; }
.red { background: #513c42; }
.red .fill { background: #c92328; }
.gray { background: #475659; }
.gray .fill { background: #a4a4a4; }
.orange { background: #4e4e3d; }
.orange .fill { background: #cb8826; }
.resists {
  display: grid;
  grid-template-columns: 20px repeat(4, 61px) 84px;
  column-gap: 4px;
  align-items: center;
  justify-items: center;
  padding-left: 8px;
}
.resists .bar {
  width: 100%;
}
.damage {
  margin-left: 6px;
  padding: 1px 0 0 2px;
  border-top: 1px solid #a0a0a0;
}
.ehp-btn {
  width: 65px;
  height: 24px;
  margin: 2px 0 1px;
  padding: 0;
  border: 1px solid #707070;
  border-radius: 3px;
  background: linear-gradient(#f2f2f2, #ebebeb 48%, #dddddd 52%, #cfcfcf);
  line-height: 22px;
}
.recharge {
  display: grid;
  grid-template-columns: 21px repeat(4, 87px);
  grid-auto-rows: 24px;
  align-items: center;
  justify-items: center;
  padding-left: 8px;
}
.head {
  margin-top: 4px;
}
.item {
  display: flex;
  align-items: center;
}
.item .ic {
  width: 22px;
}
.firepower {
  display: grid;
  grid-template-columns: 100px 92px 164px 22px;
  padding-left: 8px;
}
.firepower dl {
  display: grid;
  grid-template-columns: 63px auto;
  column-gap: 5px;
}
.firepower dt {
  text-align: right;
}
.remote {
  display: grid;
  grid-template-columns: repeat(4, 66px);
  grid-auto-rows: 24px;
  column-gap: 28px;
  align-items: center;
  justify-items: center;
}
.capacitor {
  display: grid;
  grid-template-columns: 20px 179px 20px 140px;
  align-items: center;
  padding-left: 9px;
}
.capacitor p {
  width: 0;
  padding-left: 4px;
}
.cover {
  z-index: 1;
  width: 16px;
  height: 20px;
  background: #f0f0f0;
}
.flow div {
  display: flex;
  justify-content: space-between;
}
.targeting {
  display: flex;
  padding: 1px 0 1px 11px;
}
.targeting dl {
  display: grid;
  flex: none;
  grid-template-columns: 113px 75px;
  padding: 4px 0;
}
.targeting .misc {
  grid-template-columns: 110px auto;
  padding-left: 6px;
  border-left: 1px solid #a0a0a0;
}
.price {
  display: grid;
  grid-template-columns: repeat(3, 124px);
  padding-left: 8px;
}
```
